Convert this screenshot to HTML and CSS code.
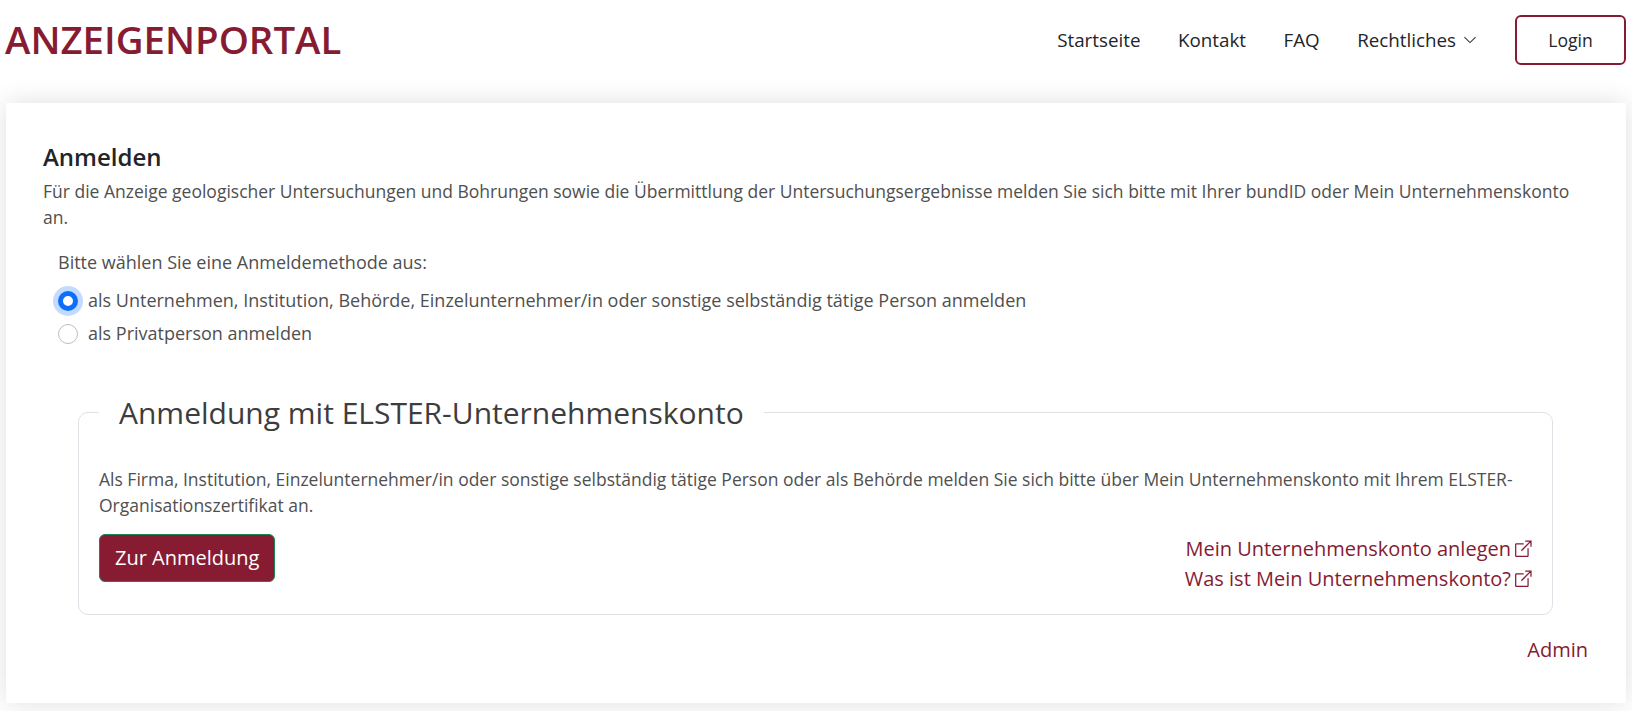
FILE: index.html
```html
<!DOCTYPE html>
<html lang="de">
<head>
<meta charset="utf-8">
<title>Anzeigenportal</title>
<link rel="stylesheet" href="styles.css">
</head>
<body>
<header class="topbar">
  <a class="brand">ANZEIGENPORTAL</a>
  <nav class="nav">
    <a class="nav-link">Startseite</a>
    <a class="nav-link">Kontakt</a>
    <a class="nav-link">FAQ</a>
    <a class="nav-link nav-drop">Rechtliches
      <svg class="chev" viewBox="0 0 16 16" width="14" height="14"><path d="M1.6 4.6 8 11l6.4-6.4" fill="none" stroke="currentColor" stroke-width="1.2"/></svg>
    </a>
    <a class="login">Login</a>
  </nav>
</header>
<main class="card">
  <h1 class="title">Anmelden</h1>
  <p class="intro">Für die Anzeige geologischer Untersuchungen und Bohrungen sowie die Übermittlung der Untersuchungsergebnisse melden Sie sich bitte mit Ihrer bundID oder Mein Unternehmenskonto an.</p>
  <div class="method">
    <p class="method-label">Bitte wählen Sie eine Anmeldemethode aus:</p>
    <label class="radio-row"><span class="radio radio-on"></span>als Unternehmen, Institution, Behörde, Einzelunternehmer/in oder sonstige selbständig tätige Person anmelden</label>
    <label class="radio-row"><span class="radio"></span>als Privatperson anmelden</label>
  </div>
  <fieldset class="box">
    <legend class="box-legend">Anmeldung mit ELSTER-Unternehmenskonto</legend>
    <p class="box-text">Als Firma, Institution, Einzelunternehmer/in oder sonstige selbständig tätige Person oder als Behörde melden Sie sich bitte über Mein Unternehmenskonto mit Ihrem ELSTER-Organisationszertifikat an.</p>
    <div class="box-foot">
      <a class="primary">Zur Anmeldung</a>
      <div class="ext-links">
        <a class="ext">Mein Unternehmenskonto anlegen <svg class="ext-icon" viewBox="0 0 16 16" width="18" height="18"><path d="M8.6 3.5H2a.5.5 0 0 0-.5.5v10a.5.5 0 0 0 .5.5h10a.5.5 0 0 0 .5-.5V7.4M6.5 9.5 15 1M10 .9h5.1V6" fill="none" stroke="currentColor" stroke-width="1.1"/></svg></a>
        <a class="ext">Was ist Mein Unternehmenskonto? <svg class="ext-icon" viewBox="0 0 16 16" width="18" height="18"><path d="M8.6 3.5H2a.5.5 0 0 0-.5.5v10a.5.5 0 0 0 .5.5h10a.5.5 0 0 0 .5-.5V7.4M6.5 9.5 15 1M10 .9h5.1V6" fill="none" stroke="currentColor" stroke-width="1.1"/></svg></a>
      </div>
    </div>
  </fieldset>
  <div class="admin-row"><a class="admin">Admin</a></div>
</main>
</body>
</html>
```
FILE: styles.css
```css
* { box-sizing: border-box; }
html, body { margin: 0; padding: 0; }
body {
  font-family: "Open Sans", "Liberation Sans", sans-serif;
  font-size: 16px;
  line-height: 1.5;
  color: #4f4f4f;
  background: #fff;
  min-height: 100vh;
  padding-bottom: 8px;
}
.topbar {
  display: flex;
  justify-content: space-between;
  align-items: center;
  height: 79px;
  padding: 0 6px 0 5px;
}
.brand {
  font-size: 38.4px;
  font-weight: 600;
  line-height: 1;
  color: #861b32;
}
.nav { display: flex; align-items: center; }
.nav-link {
  color: #212529;
  font-size: 18.8px;
  margin-right: 37.5px;
  padding-top: 1px;
  display: flex;
  align-items: center;
}
.nav-drop { margin-right: 38px; gap: 7px; }
.chev { color: #343a40; }
.login {
  width: 111px;
  height: 50px;
  border: 2px solid #861b32;
  border-radius: 6px;
  color: #212529;
  font-size: 17.6px;
  padding-top: 1px;
  display: flex;
  align-items: center;
  justify-content: center;
}
.card {
  margin: 24px 6px 0;
  height: 600px;
  padding: 39px 37px 0 37px;
  background: #fff;
  box-shadow: 0 0 24px rgba(0,0,0,.13);
}
.title {
  margin: 0;
  font-size: 24px;
  font-weight: 600;
  line-height: 30px;
  color: #212529;
}
.intro { margin: 6px 0 0; font-size: 17.5px; line-height: 26px; }
.method { margin-top: 19px; padding-left: 15px; }
.method-label { margin: 0 0 9px; font-size: 18px; line-height: 26px; }
.radio-row {
  display: flex;
  align-items: center;
  height: 33px;
  gap: 10px;
  font-size: 18px;
}
.radio {
  width: 20px;
  height: 20px;
  border-radius: 50%;
  border: 1px solid #bdbdbd;
  background: #fff;
  flex: none;
}
.radio-on {
  border: 5px solid #0d6efd;
  box-shadow: 0 0 0 5px rgba(13,110,253,.25);
}
.box {
  margin: 40px 36px 0 35px;
  padding: 31px 20px 20px;
  border: 1px solid #dee2e6;
  border-radius: 10px;
  min-width: 0;
}
.box-legend {
  margin-left: 0;
  padding: 0 20px;
  font-size: 30px;
  line-height: 1.5;
  font-weight: 400;
  color: #3d3d3d;
}
.box-text { margin: 0; font-size: 17.5px; line-height: 26px; }
.box-foot {
  display: flex;
  justify-content: space-between;
  align-items: flex-start;
  margin-top: 16px;
}
.primary {
  background: #861b32;
  color: #fff;
  border: 1px solid #198754;
  border-radius: 6px;
  font-size: 20px;
  line-height: 28px;
  padding: 9px 15px;
}
.ext-links { display: flex; flex-direction: column; align-items: flex-end; }
.ext {
  color: #861b32;
  font-size: 20px;
  line-height: 30px;
  display: flex;
  align-items: center;
  gap: 3px;
  white-space: nowrap;
}
.ext-icon { flex: none; }
.admin-row { display: flex; justify-content: flex-end; margin-top: 21px; padding-right: 1px; }
.admin { color: #861b32; font-size: 20px; line-height: 28px; }
```
